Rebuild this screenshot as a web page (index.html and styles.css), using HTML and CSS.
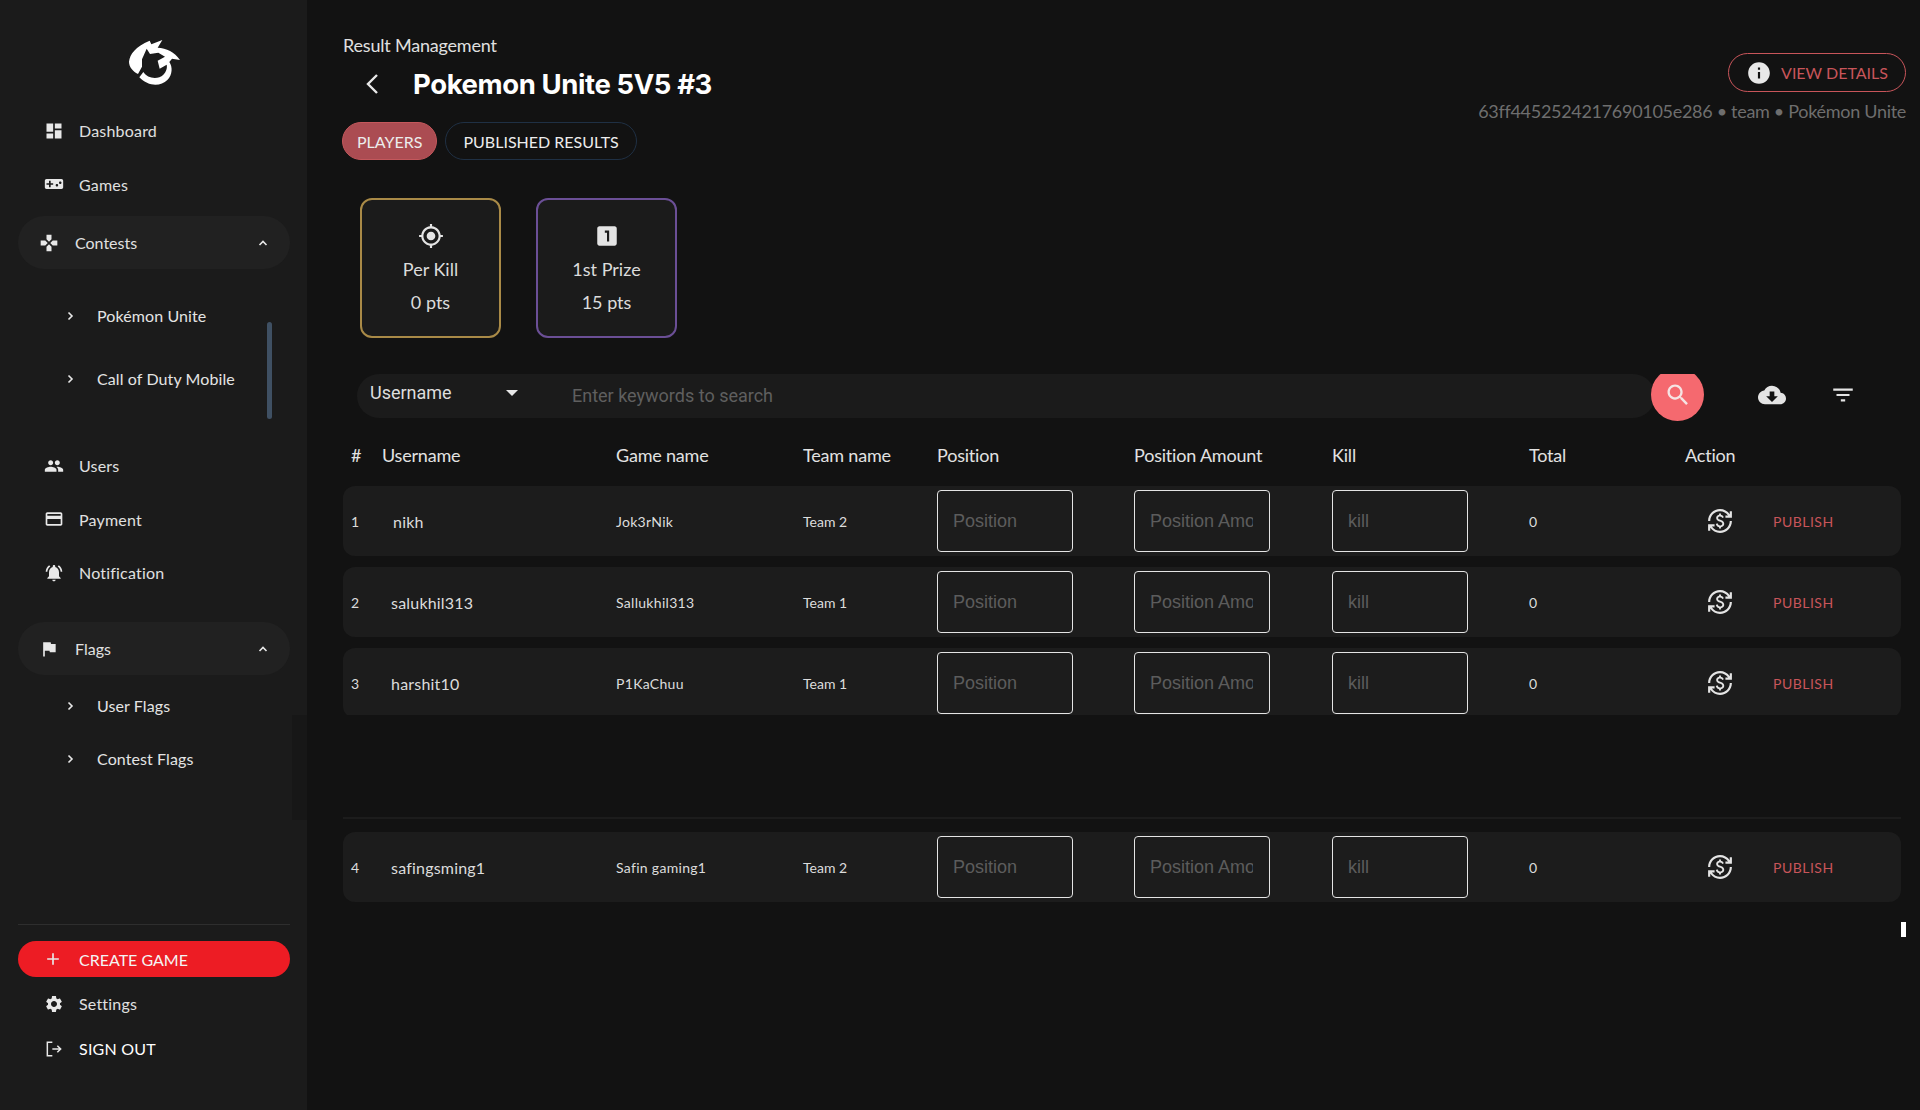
FILE: index.html
```html
<!DOCTYPE html>
<html>
<head>
  <title>Result Management</title>
  <link rel="stylesheet" href="styles.css">
</head>
<body>
<div class="app">

  <aside class="sidebar">
    <div class="logo">
      <svg width="72" height="64" viewBox="0 0 216 192"><path d="M33 95C36 72 52 50 95 32L100 43L133 30L119 53C145 54 170 66 186 90L162 86L154 96C164 110 164 135 148 150C128 170 90 170 64 142L76 126C88 146 120 150 136 134C146 124 148 112 146 104L125 116L119 92L141 80L121 68L96 72L86 56L72 88L72 110L60 132C44 124 33 110 33 95Z"/></svg>
    </div>
    <nav class="nav-top">
      <a class="nav-item"><svg viewBox="0 0 24 24"><path d="M3 13h8V3H3v10zm0 8h8v-6H3v6zm10 0h8V11h-8v10zm0-18v6h8V3h-8z"/></svg>Dashboard</a>
      <a class="nav-item"><svg viewBox="0 0 24 24"><path d="M21 6H3c-1.1 0-2 .9-2 2v8c0 1.1.9 2 2 2h18c1.1 0 2-.9 2-2V8c0-1.1-.9-2-2-2zm-10 7H8v3H6v-3H3v-2h3V8h2v3h3v2zm4.5 2c-.83 0-1.5-.67-1.5-1.5s.67-1.5 1.5-1.5 1.5.67 1.5 1.5-.67 1.5-1.5 1.5zm4-3c-.83 0-1.5-.67-1.5-1.5S18.67 9 19.5 9s1.5.67 1.5 1.5-.67 1.5-1.5 1.5z"/></svg>Games</a>
      <a class="nav-group contests"><svg viewBox="0 0 24 24"><path d="M15 7.5V2H9v5.5l3 3 3-3zM7.5 9H2v6h5.5l3-3-3-3zM9 16.5V22h6v-5.5l-3-3-3 3zM16.5 9l-3 3 3 3H22V9h-5.5z"/></svg><span class="grow">Contests</span><svg class="chev" viewBox="0 0 12 12"><path d="M2.5 8 6 4.5 9.5 8"/></svg></a>
      <div class="sub-scroll">
        <a class="sub-item"><svg class="chev" viewBox="0 0 12 12"><path d="M4.5 2.5 8 6 4.5 9.5"/></svg>Pokémon Unite</a>
        <a class="sub-item"><svg class="chev" viewBox="0 0 12 12"><path d="M4.5 2.5 8 6 4.5 9.5"/></svg>Call of Duty Mobile</a>
        <div class="scroll-thumb"></div>
      </div>
      <a class="nav-item"><svg viewBox="0 0 24 24"><path d="M16 11c1.66 0 2.99-1.34 2.99-3S17.66 5 16 5c-1.66 0-3 1.34-3 3s1.34 3 3 3zm-8 0c1.66 0 2.99-1.34 2.99-3S9.66 5 8 5C6.34 5 5 6.34 5 8s1.34 3 3 3zm0 2c-2.33 0-7 1.17-7 3.5V19h14v-2.5c0-2.33-4.67-3.5-7-3.5zm8 0c-.29 0-.62.02-.97.05 1.16.84 1.97 1.97 1.97 3.45V19h6v-2.5c0-2.33-4.67-3.5-7-3.5z"/></svg>Users</a>
      <a class="nav-item"><svg viewBox="0 0 24 24"><path d="M20 4H4c-1.11 0-1.99.89-1.99 2L2 18c0 1.11.89 2 2 2h16c1.11 0 2-.89 2-2V6c0-1.11-.89-2-2-2zm0 14H4v-6h16v6zm0-10H4V6h16v2z"/></svg>Payment</a>
      <a class="nav-item"><svg viewBox="0 0 24 24"><path d="M7.58 4.08L6.15 2.65C3.75 4.48 2.17 7.3 2.03 10.5h2c.15-2.65 1.51-4.97 3.55-6.42zm12.39 6.42h2c-.15-3.2-1.73-6.02-4.12-7.85l-1.42 1.43c2.02 1.45 3.39 3.77 3.54 6.42zM18 11c0-3.07-1.64-5.64-4.5-6.32V4c0-.83-.67-1.5-1.5-1.5s-1.5.67-1.5 1.5v.68C7.63 5.36 6 7.92 6 11v5l-2 2v1h16v-1l-2-2v-5zm-6 11c.14 0 .27-.01.4-.04.65-.14 1.18-.58 1.44-1.18.1-.24.15-.5.15-.78h-4c.01 1.1.9 2 2.01 2z"/></svg>Notification</a>
      <a class="nav-group flags"><svg viewBox="0 0 24 24"><path d="M14.4 6L14 4H5v17h2v-7h5.6l.4 2h7V6z"/></svg><span class="grow">Flags</span><svg class="chev" viewBox="0 0 12 12"><path d="M2.5 8 6 4.5 9.5 8"/></svg></a>
      <div class="flag-sub">
        <a class="sub-item"><svg class="chev" viewBox="0 0 12 12"><path d="M4.5 2.5 8 6 4.5 9.5"/></svg>User Flags</a>
        <a class="sub-item"><svg class="chev" viewBox="0 0 12 12"><path d="M4.5 2.5 8 6 4.5 9.5"/></svg>Contest Flags</a>
      </div>
    </nav>
    <div class="nav-bottom">
      <a class="create-btn"><svg viewBox="0 0 24 24"><path d="M19 13h-6v6h-2v-6H5v-2h6V5h2v6h6v2z"/></svg>CREATE GAME</a>
      <a class="nav-item"><svg viewBox="0 0 24 24"><path d="M19.14 12.94c.04-.3.06-.61.06-.94 0-.32-.02-.64-.07-.94l2.03-1.58c.18-.14.23-.41.12-.61l-1.92-3.32c-.12-.22-.37-.29-.59-.22l-2.39.96c-.5-.38-1.03-.7-1.62-.94l-.36-2.54c-.04-.24-.24-.41-.48-.41h-3.84c-.24 0-.43.17-.47.41l-.36 2.54c-.59.24-1.13.57-1.62.94l-2.39-.96c-.22-.08-.47 0-.59.22L2.74 8.87c-.12.21-.08.47.12.61l2.03 1.58c-.05.3-.09.63-.09.94s.02.64.07.94l-2.03 1.58c-.18.14-.23.41-.12.61l1.92 3.32c.12.22.37.29.59.22l2.39-.96c.5.38 1.03.7 1.62.94l.36 2.54c.05.24.24.41.48.41h3.84c.24 0 .44-.17.47-.41l.36-2.54c.59-.24 1.13-.56 1.62-.94l2.39.96c.22.08.47 0 .59-.22l1.92-3.32c.12-.22.07-.47-.12-.61l-2.01-1.58zM12 15.6c-1.98 0-3.6-1.62-3.6-3.6s1.62-3.6 3.6-3.6 3.6 1.62 3.6 3.6-1.62 3.6-3.6 3.6z"/></svg>Settings</a>
      <a class="nav-item signout"><svg class="line" viewBox="0 0 24 24"><path d="M10 4H4v16h6M10 12h10M16 8l4 4-4 4"/></svg>SIGN OUT</a>
    </div>
  </aside>

  <main class="content">
    <div class="page-head">
      <div>
        <div class="crumb">Result Management</div>
        <div class="title-row">
          <svg class="back" viewBox="0 0 16 24"><path d="M13 3 4 12l9 9"/></svg>
          <h1>Pokemon Unite 5V5 #3</h1>
        </div>
      </div>
      <div class="head-right">
        <a class="details-btn"><svg viewBox="0 0 24 24"><path d="M12 2C6.48 2 2 6.48 2 12s4.48 10 10 10 10-4.48 10-10S17.52 2 12 2zm1 15h-2v-6h2v6zm0-8h-2V7h2v2z"/></svg>VIEW DETAILS</a>
        <div class="meta">63ff4452524217690105e286 • team • Pokémon Unite</div>
      </div>
    </div>

    <div class="tabs">
      <a class="tab active">PLAYERS</a>
      <a class="tab">PUBLISHED RESULTS</a>
    </div>

    <div class="cards">
      <div class="card gold">
        <svg viewBox="0 0 24 24"><path d="M12 8c-2.21 0-4 1.79-4 4s1.79 4 4 4 4-1.79 4-4-1.79-4-4-4zm8.94 3c-.46-4.17-3.77-7.48-7.94-7.94V1h-2v2.06C6.83 3.52 3.52 6.83 3.06 11H1v2h2.06c.46 4.17 3.77 7.48 7.94 7.94V23h2v-2.06c4.17-.46 7.48-3.77 7.94-7.94H23v-2h-2.06zM12 19c-3.87 0-7-3.13-7-7s3.13-7 7-7 7 3.13 7 7-3.13 7-7 7z"/></svg>
        <div>Per Kill</div>
        <div>0 pts</div>
      </div>
      <div class="card purple">
        <svg viewBox="0 0 24 24"><path d="M19 3H5c-1.1 0-2 .9-2 2v14c0 1.1.9 2 2 2h14c1.1 0 2-.9 2-2V5c0-1.1-.9-2-2-2zm-5 14h-2V9h-2V7h4v10z"/></svg>
        <div>1st Prize</div>
        <div>15 pts</div>
      </div>
    </div>

    <div class="search-row">
      <div class="search-bar">
        <div class="search-select">Username<span class="caret"></span></div>
        <div class="search-hint">Enter keywords to search</div>
      </div>
      <a class="search-btn"><svg viewBox="0 0 24 24"><path d="M15.5 14h-.79l-.28-.27C15.41 12.59 16 11.11 16 9.5 16 5.91 13.09 3 9.5 3S3 5.91 3 9.5 5.91 16 9.5 16c1.61 0 3.09-.59 4.23-1.57l.27.28v.79l5 4.99L20.49 19l-4.99-5zm-6 0C7.01 14 5 11.99 5 9.5S7.01 5 9.5 5 14 7.01 14 9.5 11.99 14 9.5 14z"/></svg></a>
      <svg class="tool cloud" viewBox="0 0 24 24"><path d="M19.35 10.04C18.67 6.59 15.64 4 12 4 9.11 4 6.6 5.64 5.35 8.04 2.34 8.36 0 10.91 0 14c0 3.31 2.69 6 6 6h13c2.76 0 5-2.24 5-5 0-2.64-2.05-4.78-4.65-4.96zM17 13l-5 5-5-5h3V9h4v4h3z"/></svg>
      <svg class="tool filter" viewBox="0 0 24 24"><path d="M10 18h4v-2h-4v2zM3 6v2h18V6H3zm3 7h12v-2H6v2z"/></svg>
    </div>

    <div class="table">
      <div class="grid head">
        <div>#</div><div>Username</div><div>Game name</div><div>Team name</div><div>Position</div><div>Position Amount</div><div>Kill</div><div>Total</div><div>Action</div>
      </div>

      <div class="grid row">
        <div>1</div><div class="user nudge">nikh</div><div class="game">Jok3rNik</div><div>Team 2</div>
        <input class="field" placeholder="Position"><input class="field" placeholder="Position Amount"><input class="field" placeholder="kill">
        <div>0</div>
        <div class="actions"><svg viewBox="0 0 24 24"><path d="M12.89 11.1c-1.78-.59-2.64-.96-2.64-1.9 0-1.02 1.11-1.39 1.81-1.39 1.31 0 1.79.99 1.9 1.34l1.58-.67c-.15-.44-.82-1.91-2.66-2.23V5h-1.75v1.26c-2.6.56-2.62 2.85-2.62 2.96 0 2.27 2.25 2.91 3.35 3.31 1.58.56 2.28 1.07 2.28 2.03 0 1.13-1.05 1.61-1.98 1.61-1.82 0-2.34-1.87-2.4-2.09l-1.66.67c.63 2.19 2.28 2.78 3.02 2.96V19h1.75v-1.24c.52-.09 3.02-.59 3.02-3.22.01-1.39-.6-2.61-3-3.44zM3 21H1v-6h6v2H4.52c1.61 2.41 4.36 4 7.48 4 4.97 0 9-4.03 9-9h2c0 6.08-4.92 11-11 11-3.72 0-7.01-1.85-9-4.67V21zm-2-9C1 5.92 5.92 1 12 1c3.72 0 7.01 1.85 9 4.67V3h2v6h-6V7h2.48C17.87 4.59 15.12 3 12 3c-4.97 0-9 4.03-9 9H1z"/></svg><a class="publish">PUBLISH</a></div>
      </div>

      <div class="grid row">
        <div>2</div><div class="user">salukhil313</div><div class="game">Sallukhil313</div><div>Team 1</div>
        <input class="field" placeholder="Position"><input class="field" placeholder="Position Amount"><input class="field" placeholder="kill">
        <div>0</div>
        <div class="actions"><svg viewBox="0 0 24 24"><path d="M12.89 11.1c-1.78-.59-2.64-.96-2.64-1.9 0-1.02 1.11-1.39 1.81-1.39 1.31 0 1.79.99 1.9 1.34l1.58-.67c-.15-.44-.82-1.91-2.66-2.23V5h-1.75v1.26c-2.6.56-2.62 2.85-2.62 2.96 0 2.27 2.25 2.91 3.35 3.31 1.58.56 2.28 1.07 2.28 2.03 0 1.13-1.05 1.61-1.98 1.61-1.82 0-2.34-1.87-2.4-2.09l-1.66.67c.63 2.19 2.28 2.78 3.02 2.96V19h1.75v-1.24c.52-.09 3.02-.59 3.02-3.22.01-1.39-.6-2.61-3-3.44zM3 21H1v-6h6v2H4.52c1.61 2.41 4.36 4 7.48 4 4.97 0 9-4.03 9-9h2c0 6.08-4.92 11-11 11-3.72 0-7.01-1.85-9-4.67V21zm-2-9C1 5.92 5.92 1 12 1c3.72 0 7.01 1.85 9 4.67V3h2v6h-6V7h2.48C17.87 4.59 15.12 3 12 3c-4.97 0-9 4.03-9 9H1z"/></svg><a class="publish">PUBLISH</a></div>
      </div>

      <div class="grid row cut">
        <div>3</div><div class="user">harshit10</div><div class="game">P1KaChuu</div><div>Team 1</div>
        <input class="field" placeholder="Position"><input class="field" placeholder="Position Amount"><input class="field" placeholder="kill">
        <div>0</div>
        <div class="actions"><svg viewBox="0 0 24 24"><path d="M12.89 11.1c-1.78-.59-2.64-.96-2.64-1.9 0-1.02 1.11-1.39 1.81-1.39 1.31 0 1.79.99 1.9 1.34l1.58-.67c-.15-.44-.82-1.91-2.66-2.23V5h-1.75v1.26c-2.6.56-2.62 2.85-2.62 2.96 0 2.27 2.25 2.91 3.35 3.31 1.58.56 2.28 1.07 2.28 2.03 0 1.13-1.05 1.61-1.98 1.61-1.82 0-2.34-1.87-2.4-2.09l-1.66.67c.63 2.19 2.28 2.78 3.02 2.96V19h1.75v-1.24c.52-.09 3.02-.59 3.02-3.22.01-1.39-.6-2.61-3-3.44zM3 21H1v-6h6v2H4.52c1.61 2.41 4.36 4 7.48 4 4.97 0 9-4.03 9-9h2c0 6.08-4.92 11-11 11-3.72 0-7.01-1.85-9-4.67V21zm-2-9C1 5.92 5.92 1 12 1c3.72 0 7.01 1.85 9 4.67V3h2v6h-6V7h2.48C17.87 4.59 15.12 3 12 3c-4.97 0-9 4.03-9 9H1z"/></svg><a class="publish">PUBLISH</a></div>
      </div>

      <div class="split-line"></div>

      <div class="grid row">
        <div>4</div><div class="user">safingsming1</div><div class="game">Safin gaming1</div><div>Team 2</div>
        <input class="field" placeholder="Position"><input class="field" placeholder="Position Amount"><input class="field" placeholder="kill">
        <div>0</div>
        <div class="actions"><svg viewBox="0 0 24 24"><path d="M12.89 11.1c-1.78-.59-2.64-.96-2.64-1.9 0-1.02 1.11-1.39 1.81-1.39 1.31 0 1.79.99 1.9 1.34l1.58-.67c-.15-.44-.82-1.91-2.66-2.23V5h-1.75v1.26c-2.6.56-2.62 2.85-2.62 2.96 0 2.27 2.25 2.91 3.35 3.31 1.58.56 2.28 1.07 2.28 2.03 0 1.13-1.05 1.61-1.98 1.61-1.82 0-2.34-1.87-2.4-2.09l-1.66.67c.63 2.19 2.28 2.78 3.02 2.96V19h1.75v-1.24c.52-.09 3.02-.59 3.02-3.22.01-1.39-.6-2.61-3-3.44zM3 21H1v-6h6v2H4.52c1.61 2.41 4.36 4 7.48 4 4.97 0 9-4.03 9-9h2c0 6.08-4.92 11-11 11-3.72 0-7.01-1.85-9-4.67V21zm-2-9C1 5.92 5.92 1 12 1c3.72 0 7.01 1.85 9 4.67V3h2v6h-6V7h2.48C17.87 4.59 15.12 3 12 3c-4.97 0-9 4.03-9 9H1z"/></svg><a class="publish">PUBLISH</a></div>
      </div>
    </div>

    <div class="mini-thumb"></div>
  </main>

</div>
</body>
</html>
```

FILE: styles.css
```css
* {
  box-sizing: border-box;
}
html, body {
  margin: 0;
  height: 100%;
}
body {
  background: #121212;
  color: #e6e6e6;
  font-family: Lato, sans-serif;
  overflow: hidden;
}
.app {
  display: flex;
  height: 1110px;
}

/* sidebar */
.sidebar {
  width: 307px;
  flex: none;
  background: #1b1b1b;
  padding: 38px 17px 0 18px;
  display: flex;
  flex-direction: column;
}
.sidebar svg {
  fill: #e8e8e8;
  flex: none;
}
.logo {
  height: 47px;
  display: flex;
  justify-content: center;
  margin-bottom: 19px;
}
.logo svg {
  fill: #fff;
  margin-top: -8px;
}
.nav-top {
  flex: 1;
}
.nav-item {
  display: flex;
  align-items: center;
  height: 53.5px;
  padding-left: 26px;
  font-size: 16px;
  letter-spacing: 0.2px;
  color: #e0e0e0;
}
.nav-item svg {
  width: 20px;
  height: 20px;
  margin-right: 15px;
}
.nav-group {
  display: flex;
  align-items: center;
  height: 53px;
  padding: 0 21px 0 21px;
  border-radius: 27px;
  background: #212121;
  font-size: 16px;
  color: #e0e0e0;
}
.nav-group > svg:first-child {
  width: 20px;
  height: 20px;
  margin-right: 16px;
}
.contests {
  margin-top: 5px;
}
.flags {
  margin-top: 22.5px;
}
.grow {
  flex: 1;
}
.sidebar .chev {
  width: 12px;
  height: 12px;
  fill: none;
  stroke: #e8e8e8;
  stroke-width: 1.6;
}
.sub-scroll {
  position: relative;
  height: 170px;
  padding-top: 15px;
}
.sub-item {
  display: flex;
  align-items: center;
  height: 63px;
  padding-left: 46px;
  font-size: 16px;
  letter-spacing: 0.1px;
  color: #e4e4e4;
}
.sub-item .chev {
  margin-right: 21px;
}
.scroll-thumb {
  position: absolute;
  left: 249px;
  top: 53px;
  width: 5px;
  height: 97px;
  border-radius: 3px;
  background: #3f5063;
}
.flag-sub {
  position: relative;
  padding-top: 4px;
}
.flag-sub .sub-item {
  height: 53px;
}
.flag-sub::after {
  content: "";
  position: absolute;
  left: 274px;
  top: 40px;
  width: 15px;
  height: 105px;
  background: #171717;
}
.nav-bottom {
  border-top: 1px solid #2e2e2e;
  margin-bottom: 39px;
  padding-top: 16px;
}
.create-btn {
  display: flex;
  align-items: center;
  height: 36px;
  padding-left: 25px;
  border-radius: 18px;
  background: #ed1c24;
  color: #f4f4f4;
  font-size: 16px;
}
.create-btn svg {
  width: 20px;
  height: 20px;
  margin-right: 16px;
}
.nav-bottom .nav-item {
  height: 45px;
}
.create-btn + .nav-item {
  margin-top: 4px;
}
.signout {
  color: #fff;
}
.sidebar svg.line {
  fill: none;
  stroke: #e8e8e8;
  stroke-width: 1.8;
}

/* main */
.content {
  flex: 1;
  position: relative;
  padding: 34px 14px 0 36px;
}
.page-head {
  display: flex;
  justify-content: space-between;
  height: 88px;
}
.crumb {
  font-size: 18px;
  line-height: 22px;
  letter-spacing: -0.2px;
  color: #e0e0e0;
}
.title-row {
  display: flex;
  align-items: center;
  margin-top: 10px;
  height: 36px;
}
.back {
  width: 16px;
  height: 24px;
  margin: 0 33px 0 21px;
  fill: none;
  stroke: #e8e8e8;
  stroke-width: 2.4;
}
h1 {
  margin: 0;
  font-family: Inter, sans-serif;
  font-size: 27.5px;
  font-weight: 700;
  letter-spacing: -0.4px;
  color: #fff;
}
.head-right {
  display: flex;
  flex-direction: column;
  align-items: flex-end;
  padding-top: 19px;
}
.details-btn {
  display: flex;
  align-items: center;
  height: 40px;
  padding: 0 17px;
  border: 1px solid #c8555a;
  border-radius: 20px;
  color: #c8555a;
  font-size: 16px;
}
.details-btn svg {
  width: 26px;
  height: 26px;
  fill: #e8e8e8;
  margin-right: 9px;
}
.meta {
  margin-top: 8px;
  font-size: 18px;
  line-height: 22px;
  letter-spacing: -0.3px;
  color: #6e6e6e;
}
.tabs {
  display: flex;
  gap: 8px;
  margin-left: -1px;
}
.tab {
  display: flex;
  align-items: center;
  height: 38px;
  padding: 0 17px;
  border: 1px solid #1f3044;
  border-radius: 19px;
  font-size: 16px;
  color: #ececec;
}
.tab.active {
  padding: 0 14px;
  border-color: #c4585c;
  background: #ab4c52;
}
.cards {
  display: flex;
  gap: 35px;
  margin: 38px 0 0 17px;
}
.card {
  width: 141px;
  height: 140px;
  border: 2px solid #a98a47;
  border-radius: 12px;
  background: #1b1b1b;
  padding-top: 23px;
  text-align: center;
  font-size: 18px;
  line-height: 33px;
  color: #dcdcdc;
}
.card svg {
  display: block;
  width: 26px;
  height: 26px;
  margin: 0 auto 4px;
  fill: #e4e4e4;
}
.card.purple {
  border-color: #6b4f96;
}
.search-row {
  display: flex;
  align-items: center;
  height: 53px;
  margin: 30px 0 0 14px;
}
.search-bar {
  width: 1298px;
  height: 44px;
  margin-top: 2px;
  border-radius: 22px;
  background: #1b1b1b;
  display: flex;
  align-items: center;
  font-family: Roboto, sans-serif;
  font-size: 18px;
}
.search-select {
  position: relative;
  width: 216px;
  padding-left: 13px;
  margin-top: -6px;
  color: #dedede;
}
.caret {
  position: absolute;
  left: 149px;
  top: 8px;
  border: 6px solid transparent;
  border-top-color: #e8e8e8;
  border-bottom: 0;
}
.search-hint {
  margin-left: -1px;
  color: #5f5f5f;
}
.search-btn {
  width: 53px;
  height: 53px;
  margin-left: -4px;
  border-radius: 50%;
  background: #f5696f;
  clip-path: inset(6px 0 0 0);
  display: flex;
  align-items: center;
  justify-content: center;
}
.search-btn svg {
  width: 28px;
  height: 28px;
  fill: #f5e4e4;
}
.tool {
  fill: #e4e4e4;
}
.cloud {
  width: 28px;
  height: 28px;
  margin-left: 54px;
}
.filter {
  width: 26px;
  height: 26px;
  margin-left: 44px;
}

/* table */
.table {
  margin: 6px 5px 0 0;
}
.grid {
  display: grid;
  grid-template-columns: 31px 234px 187px 134px 197px 198px 197px 156px 1fr;
  align-items: center;
  padding-left: 8px;
}
.head {
  height: 59px;
  padding-bottom: 4px;
  font-size: 18px;
  letter-spacing: -0.2px;
  color: #e2e2e2;
}
.row {
  height: 70px;
  margin-bottom: 11px;
  border-radius: 12px;
  background: #1c1c1c;
  font-size: 14px;
  color: #dcdcdc;
}
.row.cut {
  margin-top: 1px;
  margin-bottom: 10px;
  clip-path: inset(0 0 3px 0);
}
.user {
  padding-left: 9px;
  font-size: 16px;
  letter-spacing: 0.2px;
}
.user.nudge {
  padding-left: 11px;
}
.game {
  letter-spacing: 0.3px;
}
.field {
  width: 136px;
  height: 62px;
  padding: 0 16px 0 15px;
  border: 1px solid #e4e4e4;
  border-radius: 4px;
  background: transparent;
  outline: none;
  font-family: "Liberation Sans", Arial, sans-serif;
  font-size: 18px;
  color: #e4e4e4;
}
.field::placeholder {
  color: #5c5c5c;
  opacity: 1;
}
.actions {
  display: flex;
  align-items: center;
  padding-left: 22px;
}
.actions svg {
  width: 26px;
  height: 26px;
  fill: #e4e4e4;
  margin-right: 40px;
}
.publish {
  color: #c8555a;
  font-size: 14px;
  letter-spacing: 0.5px;
}
.split-line {
  height: 2px;
  margin-top: 99px;
  margin-bottom: 13px;
  background: #1c1c1c;
}
.mini-thumb {
  position: absolute;
  right: 14px;
  top: 922px;
  width: 5px;
  height: 15px;
  background: #fff;
}
```
